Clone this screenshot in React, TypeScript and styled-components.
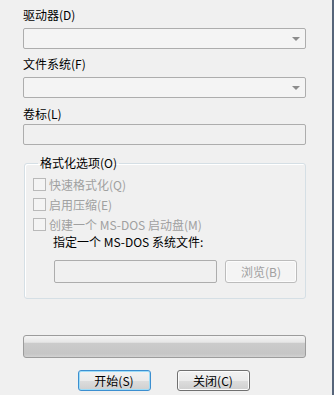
import styled, { createGlobalStyle } from "styled-components";

const Global = createGlobalStyle`
  html, body {
    margin: 0;
    padding: 0;
    background: #f0f0f0;
  }
  * {
    box-sizing: border-box;
  }
`;

const Dialog = styled.div`
  width: 334px;
  height: 395px;
  padding: 8px 26px 0 23px;
  background: #f0f0f0;
  border-right: 2px solid #56657a;
  font-family: "Noto Sans CJK SC", "Liberation Sans", sans-serif;
  font-size: 12px;
  color: #000;
  display: flex;
  flex-direction: column;
`;

const Label = styled.div<{ $gap?: number }>`
  height: 14px;
  line-height: 14px;
  margin-bottom: ${({ $gap }) => $gap ?? 6}px;
  white-space: nowrap;
`;

const Combo = styled.div<{ $after?: number }>`
  height: 21px;
  border: 1px solid #adadad;
  border-radius: 2px;
  background: #f4f4f4;
  display: flex;
  align-items: center;
  justify-content: flex-end;
  padding-right: 5px;
  margin-bottom: ${({ $after }) => $after ?? 0}px;
`;

const Arrow = styled.span`
  width: 0;
  height: 0;
  border-left: 4px solid transparent;
  border-right: 4px solid transparent;
  border-top: 4px solid #8c8c8c;
`;

const TextBox = styled.div<{ $after?: number }>`
  height: 21px;
  border: 1px solid #adadad;
  border-radius: 2px;
  background: #f0f0f0;
  margin-bottom: ${({ $after }) => $after ?? 0}px;
`;

const Group = styled.fieldset`
  margin: 0 0 0 1px;
  padding: 4px 8px 15px 8px;
  border: 1px solid #d5dfe5;
  border-radius: 3px;
  box-shadow: inset 1px 1px 0 #fff;
  display: flex;
  flex-direction: column;
  min-width: 0;
`;

const Legend = styled.legend`
  margin-left: 5px;
  padding: 0 2px;
  line-height: 14px;
`;

const CheckRow = styled.label`
  display: flex;
  align-items: center;
  height: 20px;
  gap: 3px;
  color: #a0a0a0;
  white-space: nowrap;
`;

const Box = styled.span`
  width: 13px;
  height: 13px;
  border: 1px solid #b9b9b9;
  background: #f4f4f4;
  flex-shrink: 0;
`;

const Hint = styled.div`
  height: 16px;
  line-height: 16px;
  padding-left: 20px;
  margin-bottom: 10px;
`;

const PathRow = styled.div`
  display: flex;
  gap: 8px;
  padding-left: 21px;
`;

const PathField = styled.div`
  width: 165px;
  height: 23px;
  border: 1px solid #adadad;
  border-radius: 2px;
  background: #f0f0f0;
`;

const Button = styled.div<{ $default?: boolean; $disabled?: boolean }>`
  width: 73px;
  height: ${({ $disabled }) => ($disabled ? 23 : 21)}px;
  border: 1px solid
    ${({ $default, $disabled }) =>
      $default ? "#3c8fd0" : $disabled ? "#bcbcbc" : "#707070"};
  border-radius: 3px;
  display: flex;
  align-items: center;
  justify-content: center;
  color: ${({ $disabled }) => ($disabled ? "#a0a0a0" : "#000")};
  background: ${({ $disabled }) =>
    $disabled
      ? "#f4f4f4"
      : "linear-gradient(#f2f2f2 0%, #ebebeb 50%, #dddddd 51%, #cfcfcf 100%)"};
  box-shadow: ${({ $default }) =>
    $default ? "inset 0 0 0 1px #9ddcf8" : "inset 0 0 0 1px #fcfcfc"};
`;

const Progress = styled.div`
  height: 23px;
  margin-top: 36px;
  border: 1px solid #9c9c9c;
  border-radius: 3px;
  background: linear-gradient(
    #f4f4f4 0%,
    #e6e6e6 30%,
    #cbcbcb 34%,
    #c6c6c6 85%,
    #d2d2d2 100%
  );
`;

const Actions = styled.div`
  display: flex;
  justify-content: center;
  gap: 26px;
  margin-top: 12px;
  padding-right: 2px;
`;

export default function App() {
  return (
    <>
      <Global />
      <Dialog>
        <Label>驱动器(D)</Label>
        <Combo $after={8}>
          <Arrow />
        </Combo>
        <Label>文件系统(F)</Label>
        <Combo $after={9}>
          <Arrow />
        </Combo>
        <Label $gap={3}>卷标(L)</Label>
        <TextBox $after={11} />
        <Group>
          <Legend>格式化选项(O)</Legend>
          <CheckRow>
            <Box />
            快速格式化(Q)
          </CheckRow>
          <CheckRow>
            <Box />
            启用压缩(E)
          </CheckRow>
          <CheckRow>
            <Box />
            创建一个 MS-DOS 启动盘(M)
          </CheckRow>
          <Hint>指定一个 MS-DOS 系统文件:</Hint>
          <PathRow>
            <PathField />
            <Button $disabled>浏览(B)</Button>
          </PathRow>
        </Group>
        <Progress />
        <Actions>
          <Button $default>开始(S)</Button>
          <Button>关闭(C)</Button>
        </Actions>
      </Dialog>
    </>
  );
}
